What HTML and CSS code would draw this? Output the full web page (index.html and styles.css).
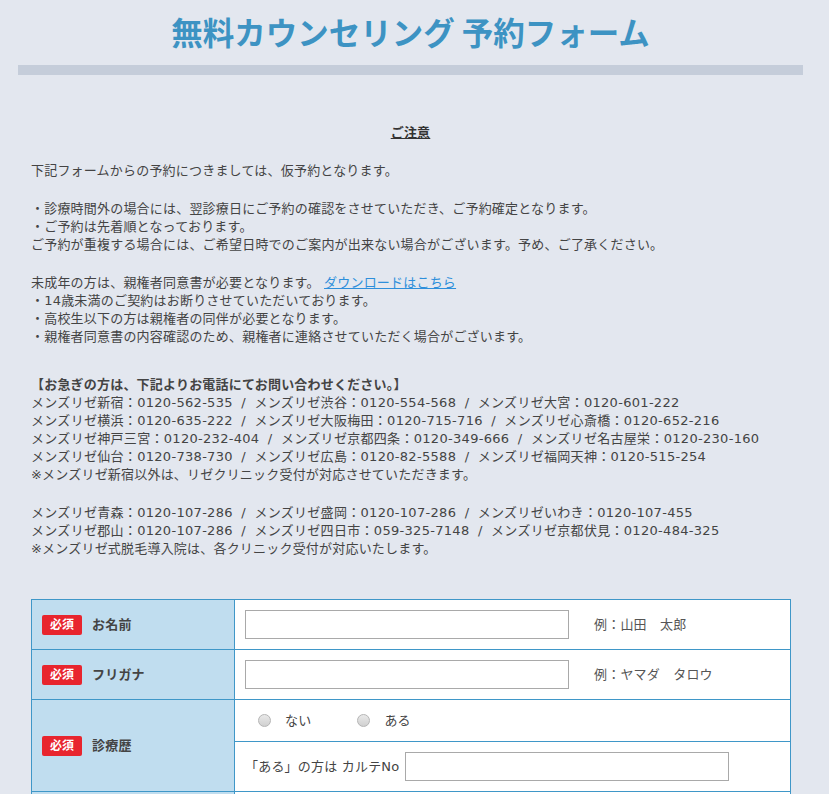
FILE: index.html
```html
<!DOCTYPE html>
<html lang="ja">
<head>
<meta charset="utf-8">
<title>無料カウンセリング 予約フォーム</title>
<link rel="stylesheet" href="styles.css">
</head>
<body>
<div class="page">
  <header class="head">
    <h1 class="title">無料カウンセリング 予約フォーム</h1>
    <div class="bar"></div>
  </header>

  <section class="notice">
    <h2 class="notice-title">ご注意</h2>
    <p class="para">下記フォームからの予約につきましては、仮予約となります。</p>
    <p class="para">・診療時間外の場合には、翌診療日にご予約の確認をさせていただき、ご予約確定となります。<br>・ご予約は先着順となっております。<br>ご予約が重複する場合には、ご希望日時でのご案内が出来ない場合がございます。予め、ご了承ください。</p>
    <p class="para">未成年の方は、親権者同意書が必要となります。 <a class="link" href="#">ダウンロードはこちら</a><br>・14歳未満のご契約はお断りさせていただいております。<br>・高校生以下の方は親権者の同伴が必要となります。<br>・親権者同意書の内容確認のため、親権者に連絡させていただく場合がございます。</p>
    <p class="para para-urgent"><strong class="strong">【お急ぎの方は、下記よりお電話にてお問い合わせください。】</strong><br><span class="phones">メンズリゼ新宿：0120-562-535 / メンズリゼ渋谷：0120-554-568 / メンズリゼ大宮：0120-601-222<br>メンズリゼ横浜：0120-635-222 / メンズリゼ大阪梅田：0120-715-716 / メンズリゼ心斎橋：0120-652-216<br>メンズリゼ神戸三宮：0120-232-404 / メンズリゼ京都四条：0120-349-666 / メンズリゼ名古屋栄：0120-230-160<br>メンズリゼ仙台：0120-738-730 / メンズリゼ広島：0120-82-5588 / メンズリゼ福岡天神：0120-515-254</span><br>※メンズリゼ新宿以外は、リゼクリニック受付が対応させていただきます。</p>
    <p class="para"><span class="phones">メンズリゼ青森：0120-107-286 / メンズリゼ盛岡：0120-107-286 / メンズリゼいわき：0120-107-455<br>メンズリゼ郡山：0120-107-286 / メンズリゼ四日市：059-325-7148 / メンズリゼ京都伏見：0120-484-325</span><br>※メンズリゼ式脱毛導入院は、各クリニック受付が対応いたします。</p>
  </section>

  <form class="form">
    <div class="label"><span class="req">必須</span>お名前</div>
    <div class="value"><div class="line"><input class="txt" type="text"><span class="ex">例：山田　太郎</span></div></div>

    <div class="label"><span class="req">必須</span>フリガナ</div>
    <div class="value"><div class="line"><input class="txt" type="text"><span class="ex">例：ヤマダ　タロウ</span></div></div>

    <div class="label label-tall"><span class="req">必須</span>診療歴</div>
    <div class="value"><div class="line line-radio"><label class="opt"><input class="radio" type="radio" name="hist">ない</label><label class="opt opt-2"><input class="radio" type="radio" name="hist">ある</label></div></div>
    <div class="value"><div class="line">「ある」の方は カルテNo<input class="txt txt-karte" type="text"></div></div>

    <div class="label"><span class="req">必須</span>生年月日</div>
    <div class="value"><div class="line"><input class="txt" type="text"><span class="ex">例：1990/01/01</span></div></div>

    <div class="label"><span class="req">必須</span>電話番号</div>
    <div class="value"><div class="line"><input class="txt" type="text"><span class="ex">例：09012345678</span></div></div>
  </form>
</div>
</body>
</html>
```
FILE: styles.css
```css
html, body {
  margin: 0;
  padding: 0;
}
body {
  background: #e3e7ef;
  color: #444;
  font-family: "DejaVu Sans", "Noto Sans CJK JP", sans-serif;
  font-size: 13px;
  line-height: 18px;
  letter-spacing: 0.2px;
}
.page {
  margin-left: 18px;
  width: 785px;
  padding-bottom: 40px;
}
.head {
  padding-top: 11px;
}
.title {
  margin: 0;
  text-align: center;
  font-family: "Noto Sans CJK JP", sans-serif;
  font-weight: 700;
  font-size: 31.5px;
  line-height: 40px;
  letter-spacing: 0;
  color: #3d93c3;
}
.bar {
  margin-top: 14px;
  height: 10px;
  background: #c5cdda;
}
.notice {
  padding: 49px 13px 0;
}
.notice-title {
  margin: 0 0 20px;
  text-align: center;
  font-size: 13px;
  line-height: 18px;
  font-weight: 700;
  text-decoration: underline;
  color: #333;
}
.para {
  margin: 0 0 20px;
}
.para-urgent {
  margin-top: 30px;
}
.strong {
  font-weight: 700;
}
.phones {
  word-spacing: 4px;
  letter-spacing: 0.3px;
}
.link {
  color: #2e8fdb;
  text-decoration: underline;
}
.form {
  margin: 41px 0 0 13px;
  width: 760px;
  box-sizing: border-box;
  display: grid;
  grid-template-columns: 203px 1fr;
  border: 1px solid #3f97c8;
  border-bottom: none;
}
.label {
  background: #c0ddef;
  border-right: 1px solid #3f97c8;
  border-bottom: 1px solid #3f97c8;
  display: flex;
  align-items: center;
  padding: 0 10px;
  font-weight: 700;
  color: #444;
}
.label-tall {
  grid-row: span 2;
}
.req {
  display: inline-block;
  width: 40px;
  height: 20px;
  line-height: 20px;
  margin-right: 10px;
  border-radius: 2px;
  background: #e8252e;
  color: #fff;
  font-size: 12px;
  font-weight: 700;
  text-align: center;
  letter-spacing: 0;
}
.value {
  background: #fff;
  border-bottom: 1px solid #3f97c8;
  padding: 10px;
}
.line {
  display: flex;
  align-items: center;
  height: 29px;
}
.line-radio {
  height: 21px;
}
.txt {
  box-sizing: border-box;
  width: 324px;
  height: 29px;
  margin: 0;
  border: 1px solid #a9a9a9;
  background: #fff;
  padding: 0 6px;
  font: inherit;
}
.txt-karte {
  margin-left: 6px;
}
.ex {
  margin-left: 25px;
  color: #555;
}
.opt {
  display: inline-flex;
  align-items: center;
  gap: 14px;
  margin-left: 13px;
}
.opt-2 {
  margin-left: 46px;
}
.radio {
  -webkit-appearance: none;
  appearance: none;
  width: 13px;
  height: 13px;
  margin: 0;
  border-radius: 50%;
  border: 1px solid #b5b5b5;
  background: linear-gradient(#e9e9e9, #d0d0d0);
}
```
